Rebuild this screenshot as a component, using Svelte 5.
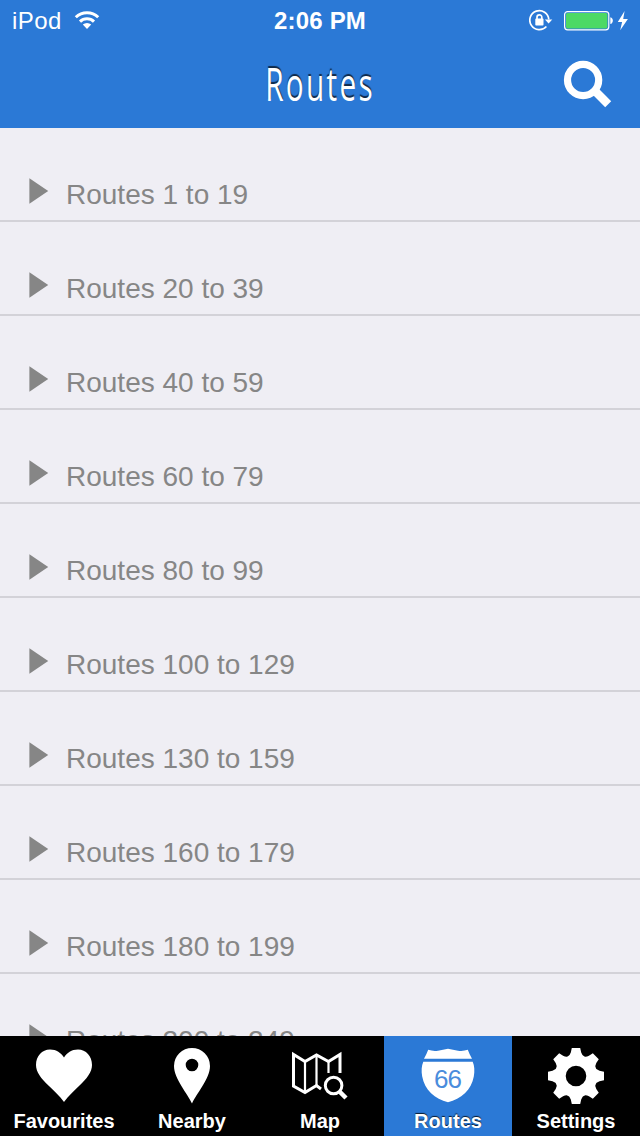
<script>
  let active = $state("Routes");
  const groups = [
    "1 to 19",
    "20 to 39",
    "40 to 59",
    "60 to 79",
    "80 to 99",
    "100 to 129",
    "130 to 159",
    "160 to 179",
    "180 to 199",
    "200 to 249",
  ];
  const tabs = ["Favourites", "Nearby", "Map", "Routes", "Settings"];
  const teeth = [0, 45, 90, 135, 180, 225, 270, 315];
</script>

<div class="app">
  <header>
    <div class="status">
      <div class="side">
        <span class="device">iPod</span>
        <svg class="wifi" width="26" height="20" viewBox="0 0 26 20">
          <path d="M1.8 7.2a16 16 0 0 1 22.4 0" />
          <path d="M6 11.6a10 10 0 0 1 14 0" />
          <path class="fill" d="M8.8 14.6a6.2 6.2 0 0 1 8.4 0L13 19z" />
        </svg>
      </div>
      <span class="time">2:06 PM</span>
      <div class="side right">
        <svg width="102" height="24" viewBox="0 0 102 24">
          <path class="ring" d="M17.4 17.5A9.5 9.5 0 1 1 19.8 10.5" />
          <path d="M15.9 10.6h7.4L19.6 14.4z" fill="#fff" />
          <path class="ring" d="M8 11V8.2a2.4 2.4 0 0 1 4.8 0V11" />
          <rect x="6.3" y="9.6" width="8.2" height="7" rx="0.8" fill="#fff" />
          <rect x="35.6" y="2.6" width="44.2" height="18.2" rx="3" class="cell" />
          <rect x="37" y="4" width="41.4" height="15.4" rx="1.6" fill="#4cd964" />
          <path d="M81.3 8.2c3.4.5 3.4 6.2 0 6.9z" fill="#fff" />
          <path d="M95.6 2 88.8 13h4.3l-1.9 8.2L98.9 10h-4.7z" fill="#fff" />
        </svg>
      </div>
    </div>
    <div class="bar">
      <h1>Routes</h1>
      <button class="search" aria-label="Search">
        <svg width="50" height="50" viewBox="0 0 50 50">
          <circle cx="20.1" cy="20" r="15.6" />
          <path d="M29.8 28.8 45.2 44.2" />
        </svg>
      </button>
    </div>
  </header>

  <ul class="list">
    {#each groups as group}
      <li>
        <svg width="20" height="26" viewBox="0 0 20 26"><path d="M0.4 0.3 19.2 13 0.4 25.7z" /></svg>
        <span>Routes {group}</span>
      </li>
    {/each}
  </ul>

  <nav>
    {#each tabs as tab}
      <button class="tab" class:active={tab === active} onclick={() => (active = tab)}>
        <svg width="128" height="70" viewBox="0 6 128 70">
          {#if tab === "Favourites"}
            <path
              d="M64 72C60 66 54 61 49 56C41 48.500 36 42 36 35C36 26 42 19.500 50 19.500C56.500 19.500 61 23 64 27.500C67 23 71.500 19.500 78 19.500C86 19.500 92 26 92 35C92 42 87 48.500 79 56C74 61 68 66 64 72z"
            />
          {:else if tab === "Nearby"}
            <path
              fill-rule="evenodd"
              d="M64 73.500C60 64 46 49 46 36A18 18 0 0 1 82 36C82 49 68 64 64 73.500zM64 28.700a6.300 6.300 0 1 0 0 12.600a6.300 6.300 0 1 0 0-12.600z"
            />
          {:else if tab === "Map"}
            <g class="lines">
              <path d="M65 59 60.500 55.500 49 62.500 37.500 56V24.500L49 31.500 60.500 25 72.500 31.500 84 24.500V43" />
              <path class="thin" d="M49 31.500V62M60.500 25V56M72.500 31.500V43" />
              <circle cx="77.600" cy="55.500" r="8.300" />
              <path class="handle" d="M83.500 61.500 90 68" />
            </g>
          {:else if tab === "Routes"}
            <path
              d="M44.200 19.800Q49 21.500 54 20.700Q59 20 64 18.800Q69 20 74 20.700Q79 21.500 83.800 19.800Q85.500 24.500 88 28.700H40Q42.500 24.500 44.200 19.800z"
            />
            <path
              d="M39.300 31.800H88.700C90.500 36 90.800 41 89.800 46.500C87.500 60 77 69 64 72.300C51 69 40.500 60 38.200 46.500C37.200 41 37.500 36 39.300 31.800z"
            />
            <text x="63.500" y="58.300">66</text>
          {:else}
            <g transform="translate(64 46)">
              {#each teeth as angle}
                <path
                  transform="rotate({angle})"
                  d="M-4.200-28H4.200L5.200-23.500Q6.200-20 9-19L6-14H-6L-9-19Q-6.200-20-5.200-23.500z"
                />
              {/each}
              <circle class="hub" r="15.300" />
            </g>
          {/if}
        </svg>
        <span>{tab}</span>
      </button>
    {/each}
  </nav>
</div>

<style>
  :global(body) {
    margin: 0;
  }
  .app {
    display: flex;
    flex-direction: column;
    width: 640px;
    height: 1136px;
    overflow: hidden;
    background: #efeef4;
    font-family: "Liberation Sans", Arial, sans-serif;
  }
  button {
    border: 0;
    padding: 0;
    background: none;
    font: inherit;
    cursor: pointer;
  }
  svg {
    display: block;
  }
  header {
    flex: none;
    height: 128px;
    background: #2b79d6;
    color: #fff;
  }
  .status {
    display: flex;
    align-items: center;
    box-sizing: border-box;
    height: 40px;
    padding: 1px 9px 0 12px;
  }
  .side {
    flex: 1;
    display: flex;
    align-items: center;
  }
  .right {
    justify-content: flex-end;
  }
  .device {
    font-size: 24px;
    letter-spacing: 0.4px;
    line-height: 40px;
  }
  .wifi {
    margin: -2px 0 0 12px;
  }
  .wifi path {
    fill: none;
    stroke: #fff;
    stroke-width: 3;
  }
  .wifi .fill {
    fill: #fff;
    stroke: none;
  }
  .time {
    margin-right: 3px;
    font-size: 24px;
    font-weight: bold;
    letter-spacing: 0.2px;
    line-height: 42px;
  }
  .ring {
    fill: none;
    stroke: #fff;
    stroke-width: 1.7;
  }
  .cell {
    fill: none;
    stroke: #fff;
    stroke-width: 1.2;
  }
  .bar {
    display: grid;
    grid-template-columns: 1fr auto 1fr;
    align-items: center;
    height: 88px;
  }
  h1 {
    grid-column: 2;
    width: 108px;
    margin: 0;
    display: flex;
    justify-content: center;
    font: 400 45px/88px "Open Sans", sans-serif;
    letter-spacing: 3.5px;
    text-shadow: 0 -2px 1px rgba(0, 0, 0, 0.65);
    transform: scaleX(0.66);
  }
  .search {
    justify-self: end;
    margin: 1px 27px 0 0;
  }
  .search circle,
  .search path {
    fill: none;
    stroke: #fff;
    stroke-width: 7.2;
  }
  .search path {
    stroke-width: 8.5;
  }
  .list {
    flex: 1;
    min-height: 0;
    overflow: hidden;
    margin: 0;
    padding: 0;
    list-style: none;
  }
  .list li {
    display: flex;
    align-items: flex-start;
    box-sizing: border-box;
    height: 94px;
    padding: 50px 0 0 29px;
    border-bottom: 2px solid #d3d2d8;
    color: #868686;
    font-size: 28px;
    line-height: 34px;
  }
  .list svg {
    fill: #868686;
    margin-right: 17px;
  }
  nav {
    flex: none;
    display: flex;
    height: 100px;
    background: #000;
  }
  .tab {
    display: flex;
    flex-direction: column;
    width: 128px;
    color: #fff;
    fill: #fff;
  }
  .tab span {
    width: 100%;
    text-align: center;
    font-size: 20px;
    font-weight: bold;
    line-height: 30px;
    text-shadow: 0 -1px 1px rgba(0, 0, 0, 0.8);
  }
  .active {
    background: #2b79d6;
  }
  .tab text {
    font-size: 26px;
    letter-spacing: -1px;
    text-anchor: middle;
    fill: #4a8cdc;
  }
  .lines {
    fill: none;
    stroke: #fff;
    stroke-width: 3;
  }
  .thin {
    stroke-width: 2.2;
  }
  .handle {
    stroke-width: 4.5;
  }
  .hub {
    fill: none;
    stroke: #fff;
    stroke-width: 10;
  }
</style>
